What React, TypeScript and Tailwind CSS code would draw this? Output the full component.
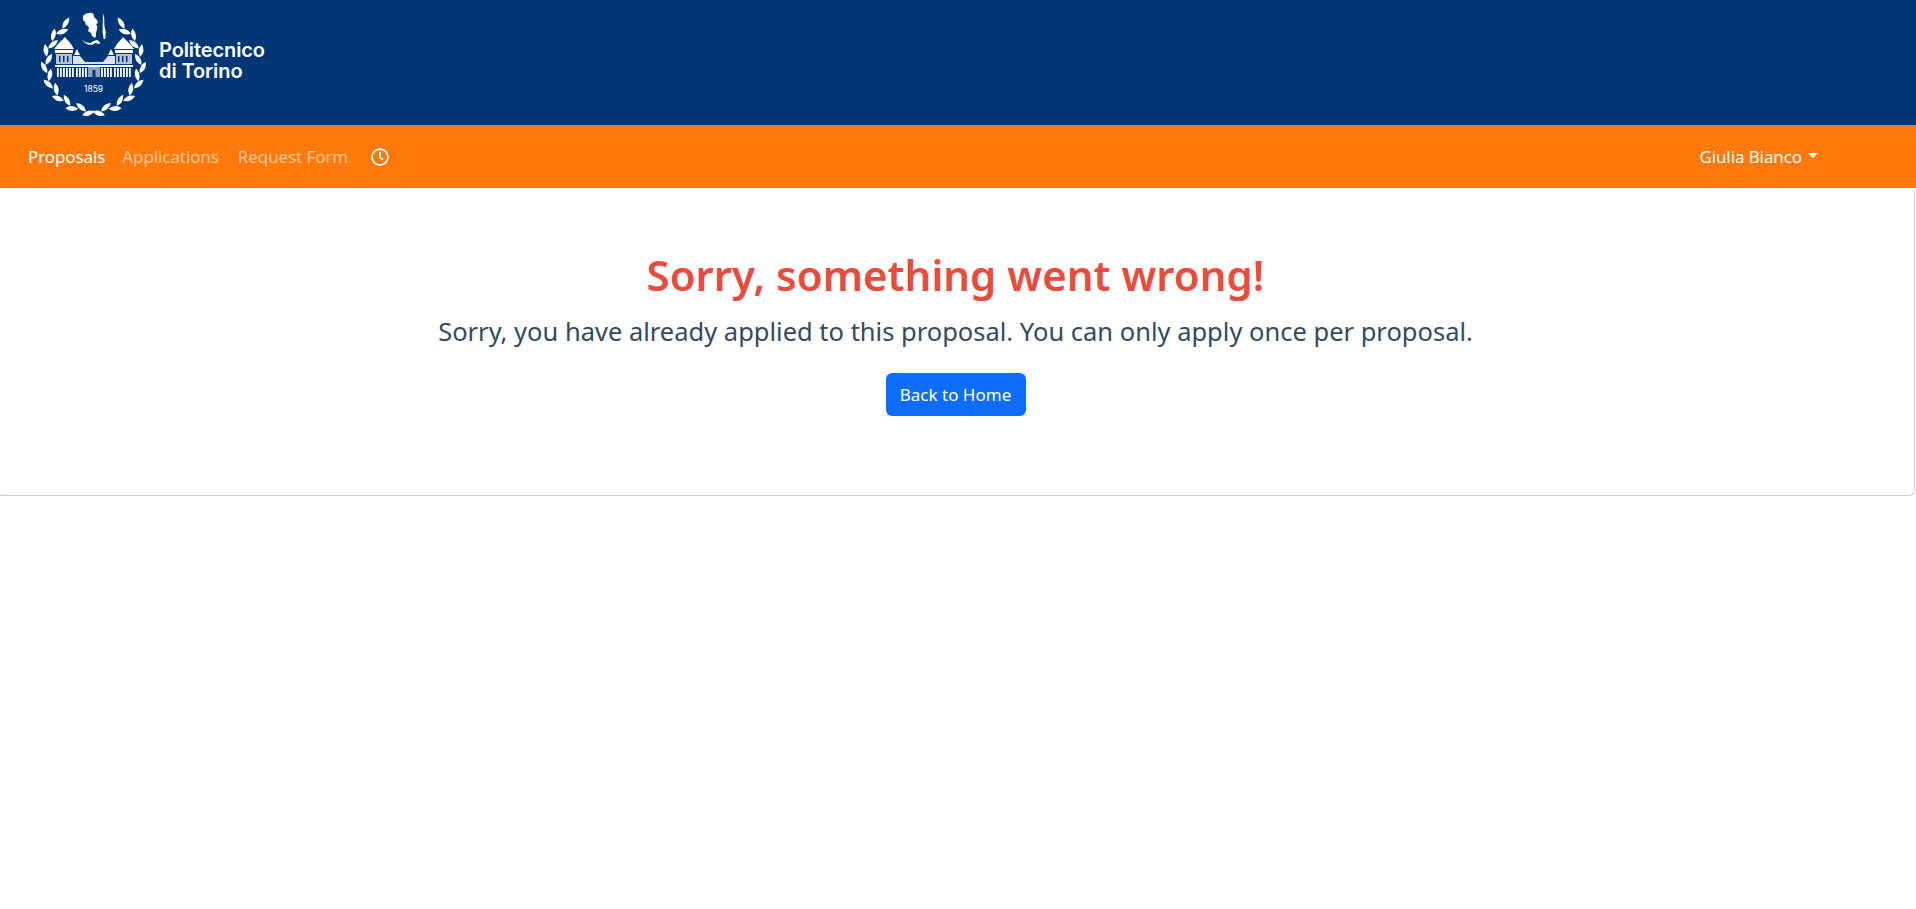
import { FaRegClock } from "react-icons/fa";

function leafList() {
  const leaves: { x: number; y: number; r: number }[] = [];
  for (let a = 96; a <= 236; a += 10) {
    const rad = (a * Math.PI) / 180;
    const odd = leaves.length % 2 === 1;
    const radius = odd ? 45 : 49.5;
    leaves.push({
      x: 93.5 + radius * Math.cos(rad),
      y: 64 + radius * Math.sin(rad),
      r: a + 90 + (odd ? 24 : -24),
    });
  }
  return leaves;
}

const lowerBars = [57, 60, 63, 66, 69, 72, 76, 79, 82, 85, 101, 104, 107, 110, 114, 117, 120, 123, 126, 129];
const towerWindows = [59, 63, 67, 118, 122, 126];
const leafPath = "M-6.500 0Q0 -4.800 6.500 0Q0 4.800 -6.500 0Z";

function Logo() {
  const leaves = leafList();
  return (
    <svg width="154" height="125" viewBox="0 0 154 125" className="shrink-0">
      <g fill="#fff">
        {leaves.map((l, i) => (
          <g key={i}>
            <path d={leafPath} transform={`translate(${l.x} ${l.y}) rotate(${l.r})`} />
            <path d={leafPath} transform={`translate(${187 - l.x} ${l.y}) rotate(${-l.r})`} />
          </g>
        ))}
        {/* figure with lance */}
        <path d="M83 16c2-3 7-4 9-3 2 1 2 3 2 4l3 3 1 3-2 1c1 2 2 3 1 5l-1 4c0 2 0 4-1 5l-3-2-1-3-3-2 1-3-1-2-2-1-1-3-2-2z" />
        <path d="M81.500 39c3 3 6 4 9 4l3-2 4-1 3 3-2 1-3-1-3 1.500c-4 1-8-1-11-5.500z" />
        <path d="M103 13l1.200 5 .2 8 1.400 6-.6 7-1.600 0-.8-6-.2-1z" />

        {/* left and right towers */}
        <path d="M65 37l6 7 3 5h-20l4-5z" />
        <path d="M123 37l-6 7-3 5h20l-4-5z" />
        <path d="M55 50h18v3H55zM115 50h18v3h-18z" />
        <path d="M56 54h16v10H56zM116 54h16v10h-16z" fillOpacity="0.7" />
        {/* turrets */}
        <path d="M77 49l3 6h-6zM111 49l3 6h-6z" />
        {/* middle block, wings run down to it */}
        <path d="M73 56h7l5 6h18l5-6h7v8H73z" fillOpacity="0.85" />
        <path d="M55 65h78v2H55z" />
        {lowerBars.map((x) => (
          <rect key={x} x={x} y="68" width="1.800" height="9" />
        ))}
        <path d="M88 66h12v11H88z" fillOpacity="0.55" />
      </g>
      <g fill="#003576">
        {towerWindows.map((x) => (
          <rect key={x} x={x} y="56" width="1.500" height="6" />
        ))}
        <rect x="92.500" y="70" width="3" height="7" />
      </g>
      <text x="93.500" y="92" textAnchor="middle" fill="#fff" fontSize="8.500" fontFamily="Inter, sans-serif">
        1859
      </text>
    </svg>
  );
}

function NavLink({ label, active }: { label: string; active?: boolean }) {
  return (
    <a className={active ? "text-white px-[9px]" : "text-white/55 px-[9px]"}>{label}</a>
  );
}

export default function App() {
  return (
    <div className="min-h-[909px] bg-white font-['Noto_Sans',sans-serif] overflow-hidden">
      <header className="h-[125px] bg-[#003576] flex items-center">
        <Logo />
        <div className="ml-[5px] mt-[-3px] text-white font-['Inter',sans-serif] font-semibold text-[20px] leading-[21px] tracking-[-0.1px]">
          <div>Politecnico</div>
          <div>di Torino</div>
        </div>
      </header>

      <nav className="h-[63px] bg-[#ff7a0a] flex items-center justify-between pl-[19px] pr-[98px] text-[17px] tracking-[-0.1px]">
        <div className="flex items-center">
          <NavLink label="Proposals" active />
          <a className="text-white/55 pl-[8px] pr-[10px]">Applications</a>
          <NavLink label="Request Form" />
          <FaRegClock className="ml-[14px] text-white text-[18px]" />
        </div>
        <div className="flex items-center gap-[6px] text-white">
          <span>Giulia Bianco</span>
          <span className="border-x-[5px] border-x-transparent border-t-[5px] border-t-white mt-[-2px]" />
        </div>
      </nav>

      <main className="h-[308px] ml-[-4px] mr-[1px] border border-t-0 border-[#cfcfcf] rounded-[6px] flex flex-col items-center pt-[60px]">
        <h1 className="text-[#e74c3c] text-[42px] leading-[54px] font-semibold">Sorry, something went wrong!</h1>
        <p className="text-[#34495e] text-[25.500px] leading-[36px] mt-[11px]">
          Sorry, you have already applied to this proposal. You can only apply once per proposal.
        </p>
        <button className="mt-[24px] h-[43px] w-[140px] rounded-[6px] bg-[#0d6efd] text-white text-[17px]">
          Back to Home
        </button>
      </main>
    </div>
  );
}
